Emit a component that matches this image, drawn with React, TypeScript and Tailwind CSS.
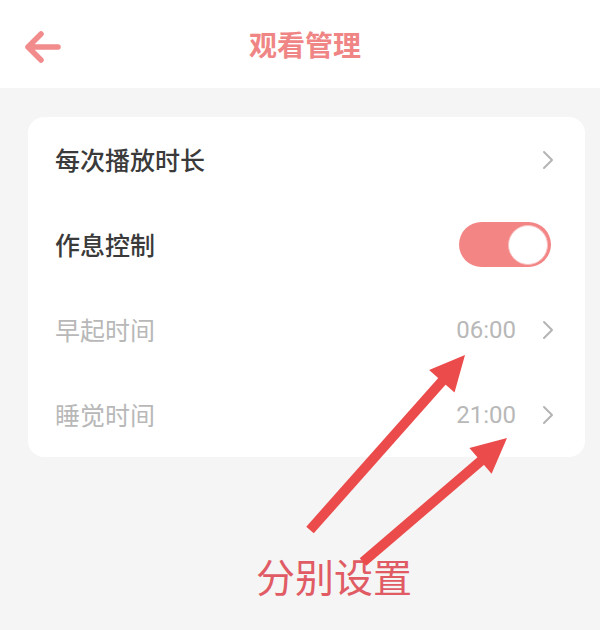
import React from 'react';

const font = { fontFamily: '"Noto Sans CJK SC", "Noto Sans", sans-serif' };

function Chevron() {
  return (
    <svg width="12" height="20" viewBox="0 0 12 20" fill="none">
      <polyline points="2,2 10,10 2,18" stroke="#b4b4b4" strokeWidth="2" strokeLinecap="round" strokeLinejoin="round" />
    </svg>
  );
}

export default function App() {
  const rows = [
    { label: '每次播放时长', dim: false, value: '', kind: 'link' },
    { label: '作息控制', dim: false, value: '', kind: 'toggle' },
    { label: '早起时间', dim: true, value: '06:00', kind: 'link' },
    { label: '睡觉时间', dim: true, value: '21:00', kind: 'link' },
  ];

  return (
    <div className="relative w-[600px] h-[630px] overflow-hidden bg-[#f5f5f5]" style={font}>
      {/* Header */}
      <div className="relative h-[88px] bg-white flex items-center justify-center">
        <svg className="absolute left-[22px] top-[29px]" width="40" height="36" viewBox="0 0 40 36" fill="none">
          <path d="M6 18H36M19 5L6 18L19 31" stroke="#f28b8b" strokeWidth="5.5" strokeLinecap="round" strokeLinejoin="round" />
        </svg>
        <h1 className="text-[28px] font-bold text-[#f08585] leading-none ml-[10px]">观看管理</h1>
      </div>

      {/* Card */}
      <div className="ml-[28px] mt-[29px] w-[557px] bg-white rounded-[16px] flex flex-col">
        {rows.map((row) => (
          <div key={row.label} className="h-[85px] flex items-center justify-between pl-[27px] pr-[31px]">
            <span className={`text-[25px] leading-none ${row.dim ? 'text-[#b8b8b8]' : 'text-[#3a3a3a] font-medium'}`}>
              {row.label}
            </span>
            {row.kind === 'toggle' ? (
              <div className="w-[92px] h-[45px] rounded-full bg-[#f38585] flex items-center justify-end pr-[3px] mr-[3px]">
                <div className="w-[40px] h-[40px] rounded-full bg-white border border-[#f7c0c0]" />
              </div>
            ) : (
              <div className="flex items-center gap-[26px]">
                {row.value && (
                  <span className="text-[24px] leading-none text-[#b8b8b8]" style={{ fontFamily: 'Roboto, "Noto Sans", sans-serif' }}>
                    {row.value}
                  </span>
                )}
                <Chevron />
              </div>
            )}
          </div>
        ))}
      </div>

      {/* Annotation label */}
      <div className="pl-[256px] mt-[99px] text-[39px] leading-none text-[#e05b64]">分别设置</div>

      {/* Annotation arrows */}
      <svg className="absolute inset-0 pointer-events-none" width="600" height="630" viewBox="0 0 600 630">
        <line x1="310" y1="530" x2="444" y2="379" stroke="#eb4b4b" strokeWidth="10" />
        <polygon points="465,355 454.5,392.5 429.1,369.9" fill="#eb4b4b" />
        <line x1="363" y1="562" x2="482" y2="460" stroke="#eb4b4b" strokeWidth="10" />
        <polygon points="507,438 491.6,473.8 469.4,448" fill="#eb4b4b" />
      </svg>
    </div>
  );
}
